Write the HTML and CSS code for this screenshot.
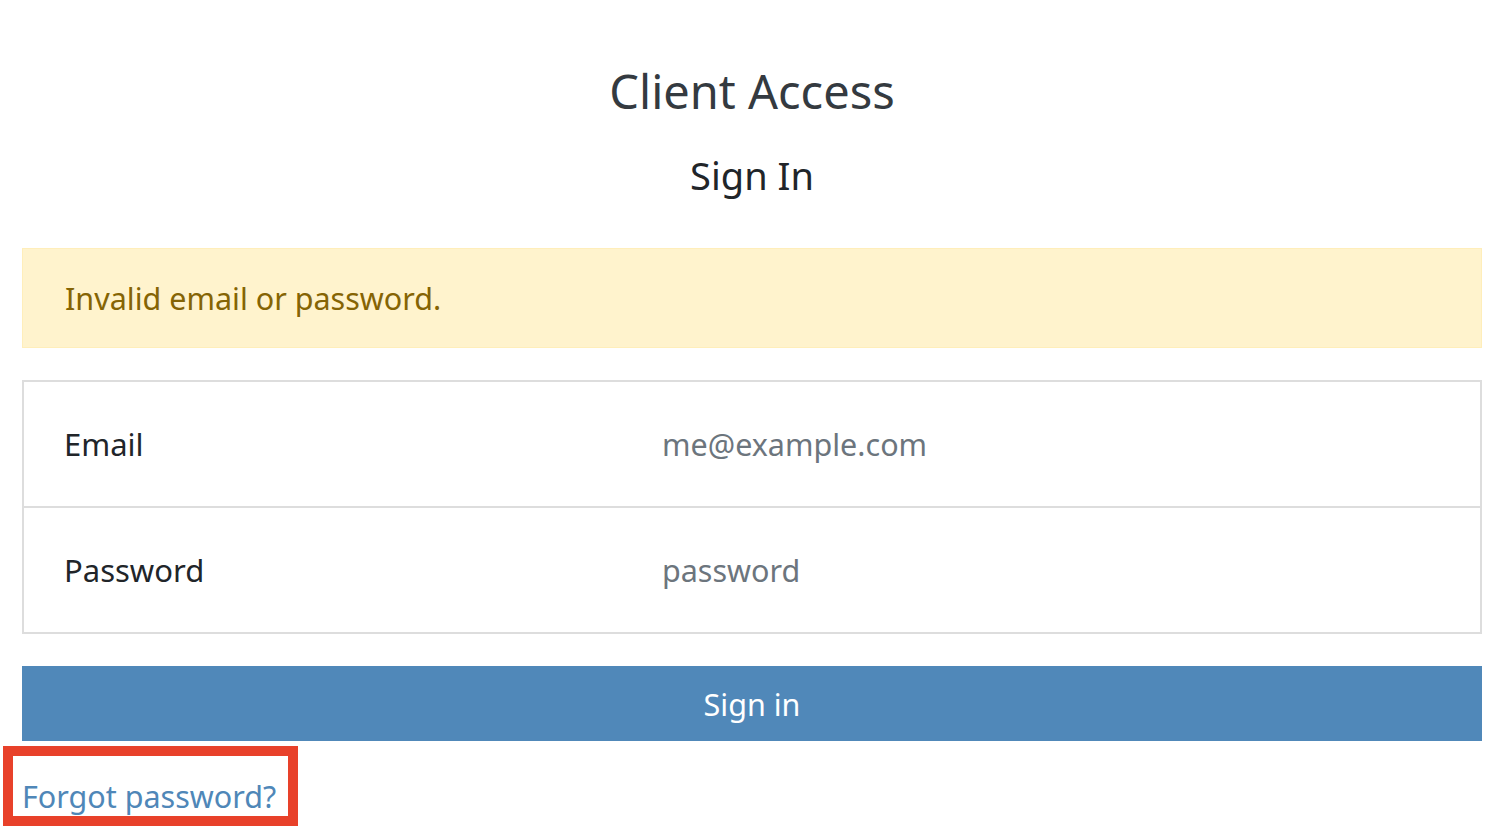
FILE: index.html
```html
<!DOCTYPE html>
<html lang="en">
<head>
    <meta charset="UTF-8">
    <meta name="viewport" content="width=device-width, initial-scale=1.0">
    <title>Client Access - Sign In</title>
    <link rel="stylesheet" href="styles.css">
</head>
<body>
    <div class="page">
        <h1 class="title">Client Access</h1>
        <h2 class="subtitle">Sign In</h2>
        <div class="alert">Invalid email or password.</div>
        <form action="#" method="POST">
            <div class="fields">
                <div class="field">
                    <label for="email">Email</label>
                    <input id="email" name="email" type="email" placeholder="me@example.com">
                </div>
                <div class="field">
                    <label for="password">Password</label>
                    <input id="password" name="password" type="password" placeholder="password">
                </div>
            </div>
            <button type="submit" class="submit">Sign in</button>
        </form>
        <div class="links">
            <a href="#" class="forgot">Forgot password?</a>
        </div>
        <div class="highlight"></div>
    </div>
</body>
</html>
```

FILE: styles.css
```css
body {
    margin: 0;
    background-color: #fff;
    font-family: "Noto Sans", "Open Sans", sans-serif;
    color: #212529;
}
.page {
    padding: 0 22px;
}
.title {
    margin: 61px 0 0;
    font-size: 47px;
    line-height: 60px;
    font-weight: 400;
    text-align: center;
    color: #343a40;
}
.subtitle {
    margin: 30px 0 0;
    font-size: 38px;
    line-height: 48px;
    font-weight: 400;
    text-align: center;
    color: #212529;
}
.alert {
    margin-top: 49px;
    padding: 25px 42px;
    font-size: 30.5px;
    line-height: 48px;
    color: #856404;
    background-color: #fff3cd;
    border: 1px solid #ffeeba;
}
form {
    margin: 0;
}
.fields {
    margin-top: 32px;
    border: 2px solid #ddd;
}
.field {
    display: grid;
    grid-template-columns: 596px 1fr;
    align-items: center;
    height: 124px;
}
.field + .field {
    border-top: 2px solid #ddd;
}
.field label {
    padding-left: 40px;
    font-size: 31px;
    color: #212529;
}
.field input {
    border: none;
    outline: none;
    padding: 0 42px;
    font-family: inherit;
    font-size: 30.5px;
    color: #212529;
    background: transparent;
}
.field input::placeholder {
    color: #6c757d;
}
.submit {
    display: block;
    width: 100%;
    height: 75px;
    margin-top: 32px;
    border: none;
    background-color: #5088b9;
    color: #fff;
    font-family: inherit;
    font-size: 30.5px;
    cursor: pointer;
}
.links {
    margin-top: 31px;
    font-size: 30.5px;
    line-height: 48px;
}
.forgot {
    color: #4f87b8;
    text-decoration: none;
}
.highlight {
    position: absolute;
    left: 3px;
    top: 746px;
    width: 275px;
    height: 60px;
    border: 10px solid #e8412a;
}
```
